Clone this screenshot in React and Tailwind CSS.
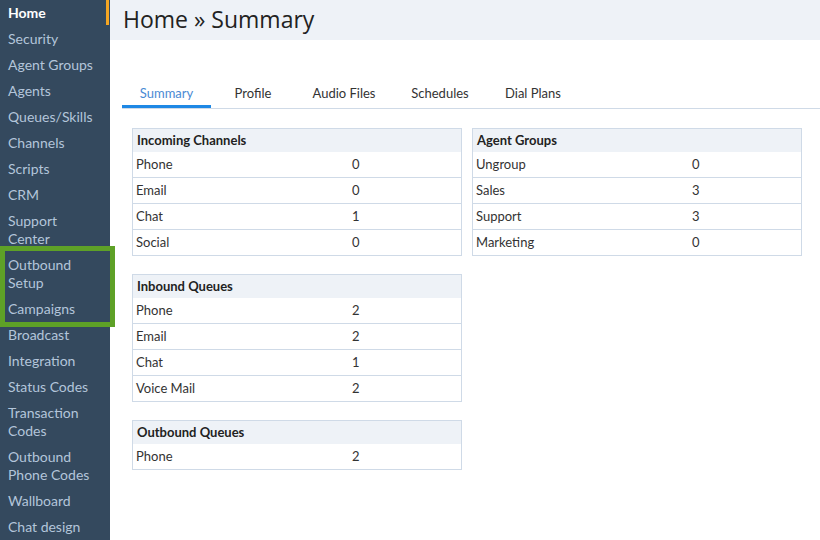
import React from 'react';

// Sidebar entries; arrays are items that wrap onto two lines
const navItems = [
  'Home',
  'Security',
  'Agent Groups',
  'Agents',
  'Queues/Skills',
  'Channels',
  'Scripts',
  'CRM',
  ['Support', 'Center'],
  ['Outbound', 'Setup'],
  'Campaigns',
  'Broadcast',
  'Integration',
  'Status Codes',
  ['Transaction', 'Codes'],
  ['Outbound', 'Phone Codes'],
  'Wallboard',
  'Chat design',
];

const tabs = [
  { label: 'Summary', w: 'w-[89px]' },
  { label: 'Profile', w: 'w-[84px]' },
  { label: 'Audio Files', w: 'w-[98px]' },
  { label: 'Schedules', w: 'w-[94px]' },
  { label: 'Dial Plans', w: 'w-[92px]' },
];

const incoming = [['Phone', 0], ['Email', 0], ['Chat', 1], ['Social', 0]];
const inbound = [['Phone', 2], ['Email', 2], ['Chat', 1], ['Voice Mail', 2]];
const outbound = [['Phone', 2]];
const agentGroups = [['Ungroup', 0], ['Sales', 3], ['Support', 3], ['Marketing', 0]];

function StatTable({ title, rows }) {
  return (
    <div className="w-[330px] border border-[#cfdae7] bg-white">
      <div className="h-[23px] bg-[#eef2f7] px-[4px] pt-[1px] flex items-center text-[13px] font-bold text-[#222]">
        {title}
      </div>
      {rows.map(([label, value], i) => (
        <div
          key={label}
          className={`flex items-center pt-[2px] text-[13px] text-[#333] ${
            i > 0 ? 'h-[26px] border-t border-[#cfdae7]' : 'h-[25px]'
          }`}
        >
          <span className="w-[219px] pl-[3px]">{label}</span>
          <span>{value}</span>
        </div>
      ))}
    </div>
  );
}

export default function App() {
  return (
    <div className="relative w-[820px] h-[540px] flex overflow-hidden bg-white font-['Lato','Open_Sans',sans-serif]">
      {/* Sidebar */}
      <nav className="w-[110px] shrink-0 bg-[#34495e] relative">
        <div className="absolute right-[1px] top-0 w-[3px] h-[25px] bg-[#f5a623]" />
        <ul className="flex flex-col">
          {navItems.map((item, i) => (
            <li
              key={i}
              className={`px-[8px] py-[4px] text-[14px] leading-[18px] whitespace-nowrap ${
                i === 0 ? 'text-white font-bold' : 'text-[#b3c5da]'
              }`}
            >
              {Array.isArray(item) ? (
                <>
                  {item[0]}
                  <br />
                  {item[1]}
                </>
              ) : (
                item
              )}
            </li>
          ))}
        </ul>
      </nav>

      {/* Highlight around outbound items */}
      <div className="absolute left-0 top-[246px] w-[115px] h-[81px] border-[5px] border-[#5ea127] pointer-events-none" />

      {/* Main */}
      <main className="flex-1 flex flex-col">
        <header className="h-[40px] bg-[#eef2f7] flex items-center pl-[13px]">
          <h1 className="text-[23px] leading-[30px] -mt-[2px] text-[#222] font-['Open_Sans',sans-serif]">
            Home » Summary
          </h1>
        </header>

        <div className="mt-[38px] ml-[12px] flex border-b border-[#cfdae7]">
          {tabs.map((t, i) => (
            <div
              key={t.label}
              className={`${t.w} text-center pt-[6px] pb-[1px] text-[13px] border-b-[3px] ${
                i === 0 ? 'text-[#4a8ad4] border-[#1e88e5]' : 'text-[#333] border-transparent'
              }`}
            >
              {t.label}
            </div>
          ))}
        </div>

        <div className="flex gap-[10px] pl-[22px] pt-[19px]">
          <div className="flex flex-col gap-[18px]">
            <StatTable title="Incoming Channels" rows={incoming} />
            <StatTable title="Inbound Queues" rows={inbound} />
            <StatTable title="Outbound Queues" rows={outbound} />
          </div>
          <div>
            <StatTable title="Agent Groups" rows={agentGroups} />
          </div>
        </div>
      </main>
    </div>
  );
}
